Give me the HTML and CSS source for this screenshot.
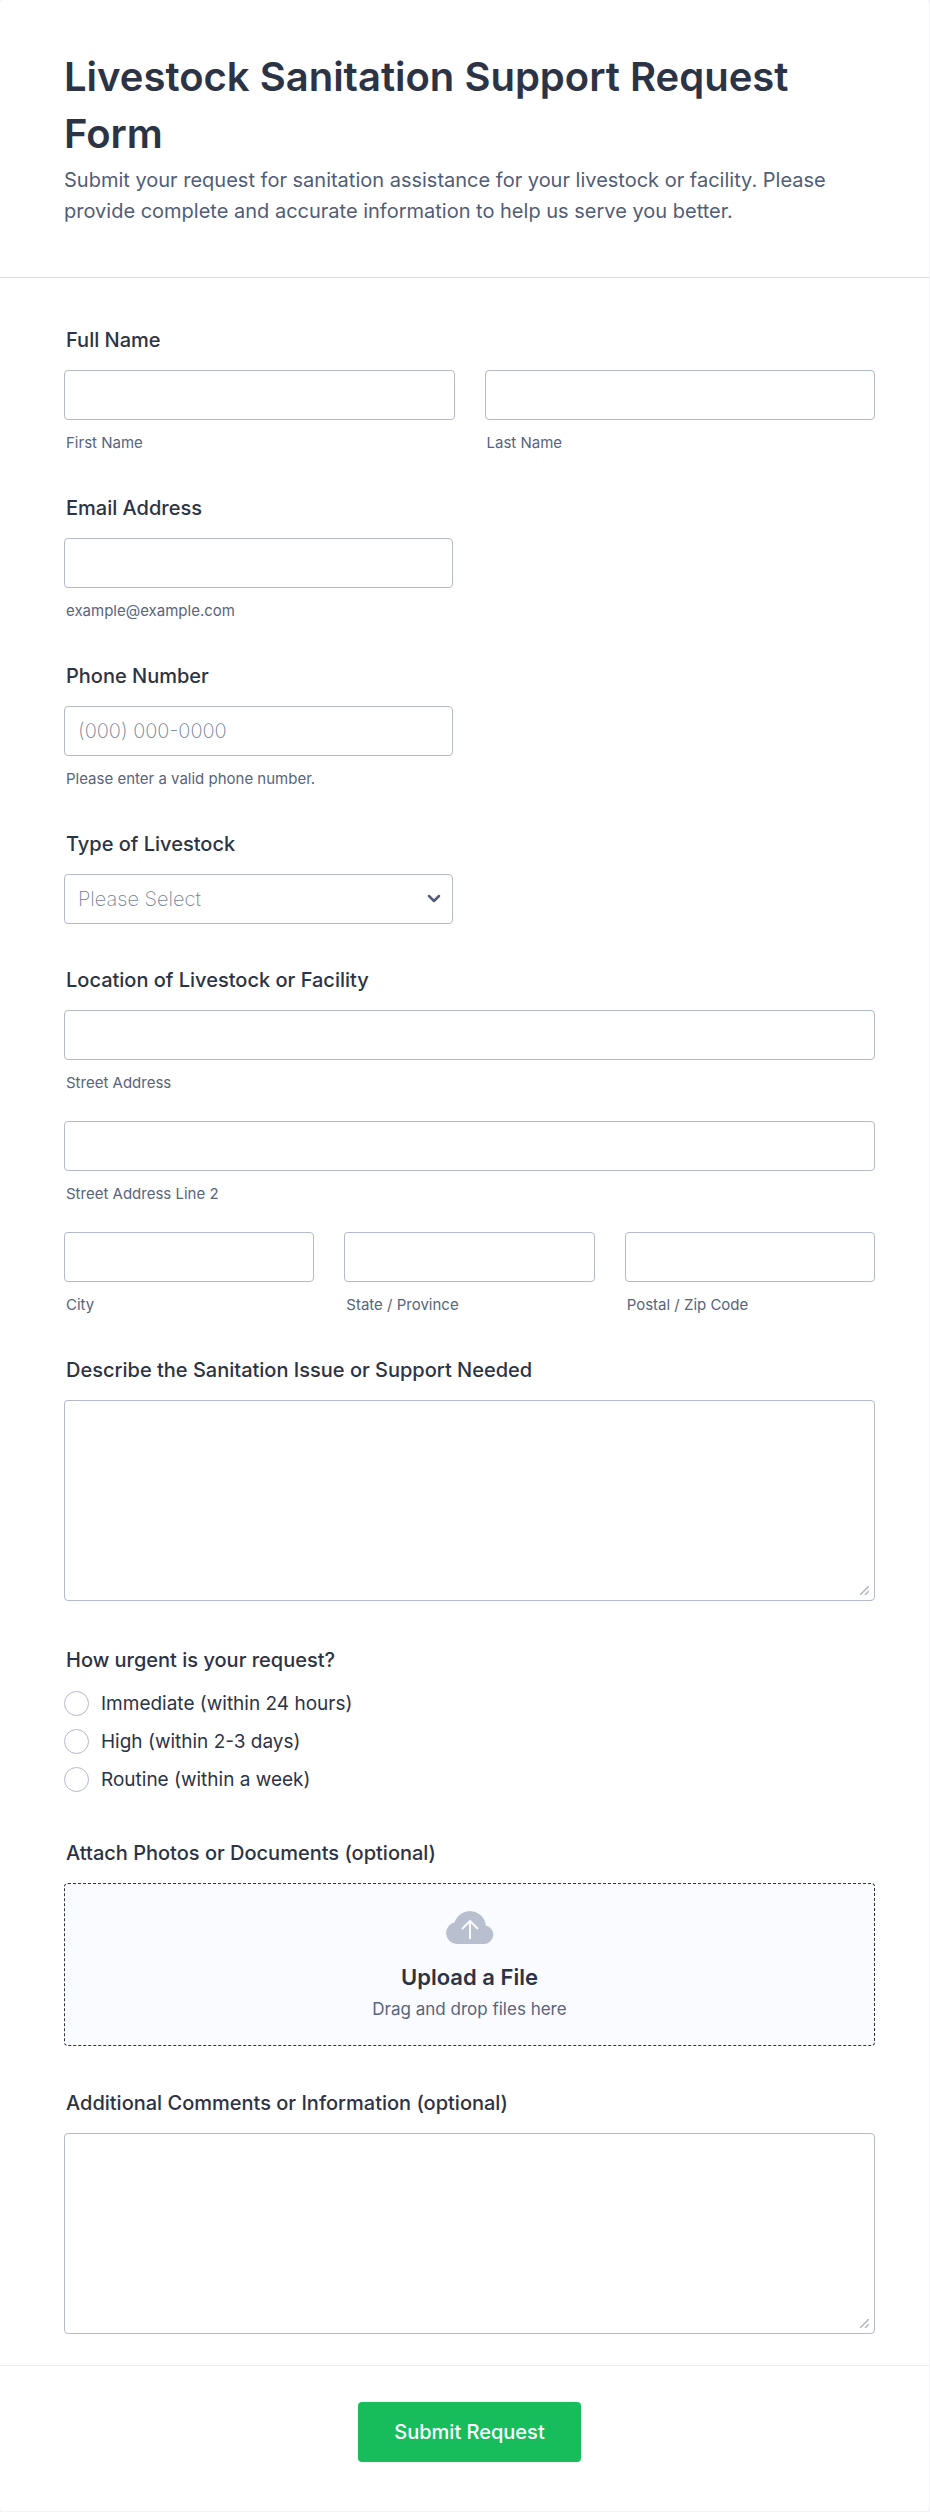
FILE: index.html
```html
<!DOCTYPE html>
<html lang="en">
<head>
  <meta charset="UTF-8" />
  <meta name="viewport" content="width=device-width, initial-scale=1.0"/>
  <title>Livestock Sanitation Support Request Form</title>
  <link rel="stylesheet" href="styles.css">
</head>
<body>

  <form class="form-card" id="requestForm">
    <header class="form-header">
      <h1>Livestock Sanitation Support Request Form</h1>
      <p>Submit your request for sanitation assistance for your livestock or facility. Please provide complete and accurate information to help us serve you better.</p>
    </header>

    <div class="form-body">
      <fieldset class="question">
        <legend class="question-label">Full Name</legend>
        <div class="columns">
          <div class="field">
            <input type="text" id="firstName" name="firstName" />
            <label class="sub-label" for="firstName">First Name</label>
          </div>
          <div class="field">
            <input type="text" id="lastName" name="lastName" />
            <label class="sub-label" for="lastName">Last Name</label>
          </div>
        </div>
      </fieldset>

      <div class="question">
        <label class="question-label" for="email">Email Address</label>
        <div class="field half">
          <input type="email" id="email" name="email" />
          <label class="sub-label" for="email">example@example.com</label>
        </div>
      </div>

      <div class="question">
        <label class="question-label" for="phone">Phone Number</label>
        <div class="field half">
          <input type="tel" id="phone" name="phone" placeholder="(000) 000-0000" />
          <label class="sub-label" for="phone">Please enter a valid phone number.</label>
        </div>
      </div>

      <div class="question">
        <label class="question-label" for="livestock">Type of Livestock</label>
        <div class="field half select-wrap">
          <select id="livestock" name="livestock">
            <option value="">Please Select</option>
          </select>
          <svg class="chevron" viewBox="0 0 14 10" aria-hidden="true">
            <path d="M2 2l5 5 5-5" />
          </svg>
        </div>
      </div>

      <fieldset class="question">
        <legend class="question-label">Location of Livestock or Facility</legend>
        <div class="address">
          <div class="field">
            <input type="text" id="street" name="street" />
            <label class="sub-label" for="street">Street Address</label>
          </div>
          <div class="field">
            <input type="text" id="street2" name="street2" />
            <label class="sub-label" for="street2">Street Address Line 2</label>
          </div>
          <div class="columns">
            <div class="field">
              <input type="text" id="city" name="city" />
              <label class="sub-label" for="city">City</label>
            </div>
            <div class="field">
              <input type="text" id="state" name="state" />
              <label class="sub-label" for="state">State / Province</label>
            </div>
            <div class="field">
              <input type="text" id="postal" name="postal" />
              <label class="sub-label" for="postal">Postal / Zip Code</label>
            </div>
          </div>
        </div>
      </fieldset>

      <div class="question">
        <label class="question-label" for="issue">Describe the Sanitation Issue or Support Needed</label>
        <div class="textarea-wrap">
          <textarea id="issue" name="issue"></textarea>
          <svg class="grip" viewBox="0 0 9 9" aria-hidden="true">
            <path d="M0 9L9 0M5 9l4-4" />
          </svg>
        </div>
      </div>

      <fieldset class="question">
        <legend class="question-label">How urgent is your request?</legend>
        <div class="options">
          <label class="option"><input type="radio" name="urgency" value="immediate" />Immediate (within 24 hours)</label>
          <label class="option"><input type="radio" name="urgency" value="high" />High (within 2-3 days)</label>
          <label class="option"><input type="radio" name="urgency" value="routine" />Routine (within a week)</label>
        </div>
      </fieldset>

      <div class="question">
        <label class="question-label" for="files">Attach Photos or Documents (optional)</label>
        <label class="upload" for="files">
          <svg class="upload-icon" viewBox="0 0 48 33" aria-hidden="true">
            <path class="cloud" d="M11 33A11 11 0 0 1 8.600 11.300A16 16 0 0 1 39.800 14.600A9.300 9.300 0 0 1 38.500 33Z" />
            <path class="arrow" d="M24 28V10M16 18l8-8 8 8" />
          </svg>
          <span class="upload-title">Upload a File</span>
          <span class="upload-text">Drag and drop files here</span>
          <input type="file" id="files" name="files" multiple />
        </label>
      </div>

      <div class="question">
        <label class="question-label" for="comments">Additional Comments or Information (optional)</label>
        <div class="textarea-wrap">
          <textarea id="comments" name="comments"></textarea>
          <svg class="grip" viewBox="0 0 9 9" aria-hidden="true">
            <path d="M0 9L9 0M5 9l4-4" />
          </svg>
        </div>
      </div>
    </div>

    <footer class="form-footer">
      <button type="submit">Submit Request</button>
    </footer>
  </form>

</body>
</html>
```
FILE: styles.css
```css
* {
  box-sizing: border-box;
}

body {
  margin: 0;
  padding: 0 1px 1px 0;
  font-family: 'Inter', sans-serif;
  font-size: 20px;
  color: #2c3345;
  background-color: #f3f3fe;
}

.form-card {
  background-color: #ffffff;
  border-radius: 4px;
}

.form-header {
  padding: 48px 54px 50px 64px;
  border-bottom: 1px solid #d7dbe7;
}

h1 {
  margin: 0 0 3px;
  font-size: 40px;
  line-height: 57px;
  font-weight: 600;
}

.form-header p {
  margin: 0;
  font-size: 20px;
  line-height: 31px;
  font-weight: 400;
  color: #505d78;
}

.form-body {
  display: flex;
  flex-direction: column;
  gap: 43px;
  padding: 50px 54px 27px 64px;
}

.question {
  margin: 0;
  padding: 0;
  border: none;
  min-width: 0;
}

.question-label {
  display: block;
  margin-bottom: 18px;
  padding: 0 2px;
  line-height: 24px;
  font-weight: 500;
}

.columns {
  display: flex;
  gap: 30px;
}

.columns .field {
  flex: 1;
}

.half {
  width: 48%;
}

.address {
  display: flex;
  flex-direction: column;
  gap: 28px;
}

input[type="text"],
input[type="email"],
input[type="tel"],
select,
textarea {
  display: block;
  width: 100%;
  height: 50px;
  padding: 0 13px;
  font-family: inherit;
  font-size: 20px;
  font-weight: 200;
  color: #2c3345;
  background-color: #ffffff;
  border: 1px solid #b4b9cc;
  border-radius: 4px;
}

input::placeholder {
  color: #6f829c;
}

.sub-label {
  display: block;
  margin-top: 13px;
  padding: 0 2px;
  font-size: 15px;
  line-height: 20px;
  color: #57647e;
}

.select-wrap {
  position: relative;
  margin-bottom: 1px;
}

select {
  appearance: none;
  color: #6f829c;
}

/* sits over the select box */
.chevron {
  position: absolute;
  top: 20px;
  right: 12px;
  width: 14px;
  height: 10px;
  fill: none;
  stroke: #535b78;
  stroke-width: 2.5;
  stroke-linecap: round;
  stroke-linejoin: round;
  pointer-events: none;
}

.textarea-wrap {
  position: relative;
  margin-bottom: 4px;
}

textarea {
  height: 201px;
  padding: 13px;
  resize: vertical;
}

textarea::-webkit-resizer {
  display: none;
}

/* resize handle in the textarea corner */
.grip {
  position: absolute;
  right: 6px;
  bottom: 6px;
  width: 9px;
  height: 9px;
  fill: none;
  stroke: #b0b5c2;
  stroke-width: 1.5;
  pointer-events: none;
}

.options {
  margin-top: -6px;
}

.option {
  display: flex;
  align-items: center;
  gap: 12px;
  height: 38px;
  font-size: 19px;
}

input[type="radio"] {
  appearance: none;
  width: 25px;
  height: 25px;
  margin: 0;
  background-color: #ffffff;
  border: 1px solid #b4b9cc;
  border-radius: 50%;
}

input[type="radio"]:checked {
  border: 7px solid #2e69ff;
}

.upload {
  position: relative;
  display: flex;
  flex-direction: column;
  align-items: center;
  height: 163px;
  margin-bottom: 2px;
  padding-top: 27px;
  background-color: #fafbff;
  border: 1px dashed #2c3345;
  border-radius: 4px;
  cursor: pointer;
}

.upload-icon {
  width: 48px;
  height: 33px;
}

.cloud {
  fill: #b8bfce;
}

.arrow {
  fill: none;
  stroke: #fafbff;
  stroke-width: 2;
}

.upload-title {
  margin-top: 17px;
  font-size: 22px;
  line-height: 32px;
  font-weight: 600;
}

.upload-text {
  font-size: 17px;
  line-height: 32px;
  color: #57647e;
}

/* covers the drop area so files can be dropped on it */
.upload input {
  position: absolute;
  inset: 0;
  width: 100%;
  height: 100%;
  opacity: 0;
}

.form-footer {
  display: flex;
  justify-content: center;
  padding: 36px 54px 49px 64px;
  border-top: 1px solid #e6ecf1;
}

button[type="submit"] {
  height: 60px;
  padding: 0 36px;
  font-family: inherit;
  font-size: 20px;
  font-weight: 500;
  color: #ffffff;
  background-color: #18bd5b;
  border: none;
  border-radius: 4px;
  cursor: pointer;
}

button[type="submit"]:hover {
  background-color: #16aa52;
}
```
